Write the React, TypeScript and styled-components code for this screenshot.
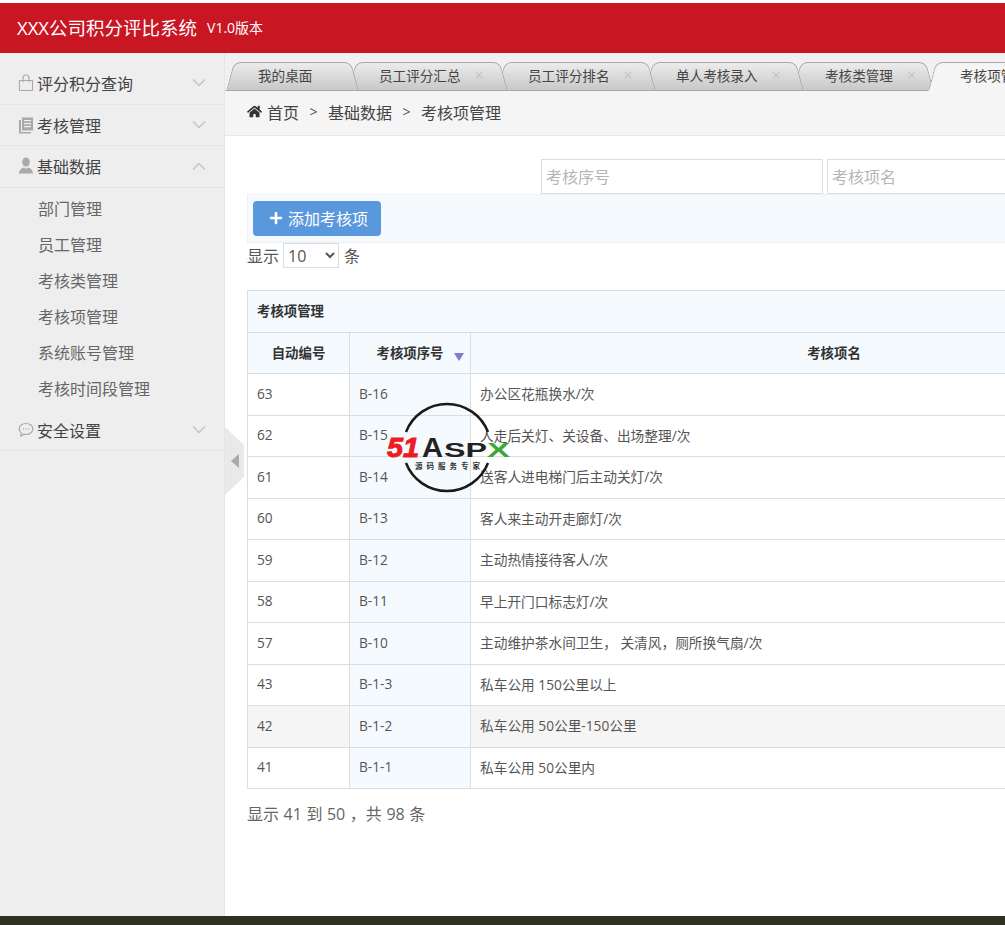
import React from 'react'
import styled, { createGlobalStyle } from 'styled-components'
import { FaHome, FaPlus } from 'react-icons/fa'

const GlobalStyle = createGlobalStyle`
    html, body {
        margin: 0;
        padding: 0;
        height: 100%;
        background: #fff;
        overflow: hidden;
    }
    body {
        font-family: "Open Sans", "Noto Sans CJK SC", sans-serif;
        color: #333;
    }
    * {
        box-sizing: border-box;
    }
`

const Page = styled.div`
    position: relative;
    width: 1005px;
    height: 925px;
    padding-top: 3px;
    display: flex;
    flex-direction: column;
    overflow: hidden;
`
const Header = styled.header`
    flex: 0 0 50px;
    background: #c81623;
    color: #fff;
    display: flex;
    align-items: center;
    padding: 0 0 3px 17px;
`
const Logo = styled.span`
    font-size: 18.5px;
`
const Version = styled.span`
    font-size: 14px;
    margin-left: 10px;
`
const Body = styled.div`
    flex: 1;
    display: flex;
    min-height: 0;
`
const Sidebar = styled.aside`
    position: relative;
    flex: 0 0 225px;
    background: #eee;
    border-right: 1px solid #e6e6e6;
    padding-top: 10px;
`
const MenuHead = styled.div`
    height: 41.5px;
    padding: 0 18px;
    display: flex;
    align-items: center;
    font-size: 16px;
    color: #444;
    border-bottom: 1px solid #e5e5e5;
`
const MenuIcon = styled.svg`
    width: 16px;
    height: 18px;
    margin-right: 3px;
    flex: none;
    color: #a9a9a9;
`
const MenuLabel = styled.span`
    flex: 1;
`
const Arrow = styled.svg`
    width: 14px;
    height: 8px;
    color: #c4c4c4;
`
const SubMenu = styled.div`
    padding: 3px 0 3px 38px;
`
const SubItem = styled.div`
    height: 36px;
    line-height: 36px;
    font-size: 16px;
    color: #666;
`
const Collapse = styled.div`
    position: absolute;
    left: 225px;
    top: 374px;
    width: 19px;
    height: 68px;
    background: #e9e9e9;
    clip-path: polygon(0 0, 100% 18px, 100% 50px, 0 100%);
    display: flex;
    align-items: center;
    padding-left: 6px;
    z-index: 3;
    &::before {
        content: '';
        border: 7px solid transparent;
        border-left: 0;
        border-right: 8px solid #a9a9a9;
    }
`
const Main = styled.main`
    flex: 1;
    min-width: 0;
    display: flex;
    flex-direction: column;
    background: #fff;
`
const TabBar = styled.div`
    height: 38px;
    padding: 9px 0 0 3px;
    background: #f0f0f0;
    display: flex;
    border-bottom: 1px solid #b5b5b5;
`
const Tab = styled.div<{ $active?: boolean; $width: number; $z: number; $pad: number; $edge: number }>`
    position: relative;
    flex: 0 0 ${(p) => p.$width}px;
    height: 29px;
    display: flex;
    align-items: center;
    font-size: 13.6px;
    color: #444;
    white-space: nowrap;
    padding: 0 0 3px ${(p) => p.$pad}px;
    z-index: ${(p) => p.$z};
    &::before, &::after {
        content: '';
        position: absolute;
        top: 0;
        bottom: 0;
        width: 60%;
        z-index: -1;
        background: ${(p) => (p.$active ? '#f5f5f5' : 'linear-gradient(#ececec, #c8c8c8)')};
        border-top: 1px solid #a8a8a8;
        border-bottom: 1px solid ${(p) => (p.$active ? '#f5f5f5' : '#a8a8a8')};
    }
    &::before {
        left: ${(p) => p.$edge}px;
        border-left: 1px solid #a8a8a8;
        border-top-left-radius: 7px;
        transform: skewX(-15deg);
    }
    &::after {
        right: 3px;
        border-right: 1px solid #a8a8a8;
        border-top-right-radius: 7px;
        transform: skewX(15deg);
    }
`
const TabClose = styled.span`
    font-size: 16px;
    color: #c4c4c4;
    margin-left: 14px;
`
const Breadcrumb = styled.div`
    height: 45px;
    background: #f5f5f5;
    border-bottom: 1px solid #e8e8e8;
    padding: 0 0 3px 22px;
    display: flex;
    align-items: center;
    font-size: 16px;
    color: #444;
    svg {
        width: 15px;
        height: 15px;
        margin-right: 5px;
        color: #333;
    }
`
const Sep = styled.span`
    margin: 0 10.5px;
    font-size: 14px;
    color: #555;
`
const Content = styled.div`
    flex: 1;
    padding: 23px 0 0 22px;
    width: 1300px;
`
const SearchRow = styled.div`
    display: flex;
    gap: 4px;
    padding-left: 294px;
`
const SearchInput = styled.input`
    width: 282px;
    height: 35px;
    border: 1px solid #ddd;
    padding: 0 4px;
    font: 16px "Open Sans", "Noto Sans CJK SC", sans-serif;
    background: #fff;
    &::placeholder {
        color: #b5b5b5;
        opacity: 1;
    }
`
const Toolbar = styled.div`
    height: 49px;
    padding: 6px 5px 5px;
    background: #f5fafe;
    border: 1px solid #eef1f4;
`
const AddButton = styled.button`
    width: 128px;
    height: 35px;
    border: 0;
    border-radius: 4px;
    background: #5a98de;
    color: #fff;
    font: 16px "Open Sans", "Noto Sans CJK SC", sans-serif;
    display: flex;
    align-items: center;
    justify-content: center;
    gap: 5px;
    padding: 0 0 2px 3px;
    svg {
        width: 14px;
        height: 14px;
    }
`
const PageSize = styled.div`
    height: 25px;
    padding-bottom: 2px;
    display: flex;
    align-items: center;
    font-size: 16px;
    color: #555;
`
const SizeSelect = styled.select`
    width: 56px;
    height: 25px;
    margin: 2px 5px 0 4px;
    border: 1px solid #ddd;
    background: #fff;
    color: #555;
    font: 16px "Open Sans", sans-serif;
    padding-left: 0;
`
const Table = styled.div`
    margin-top: 22px;
    width: 952px;
    border: 1px solid #ddd;
    border-bottom: 0;
`
const TableTitle = styled.div`
    height: 41.5px;
    padding: 0 0 3px 9px;
    display: flex;
    align-items: center;
    font-size: 13.4px;
    font-weight: 700;
    color: #333;
    background: #f5fafe;
    border-bottom: 1px solid #ddd;
`
const Row = styled.div<{ $head?: boolean; $hover?: boolean }>`
    display: grid;
    grid-template-columns: 102px 121px 1fr;
    height: 41.5px;
    font-weight: ${(p) => (p.$head ? 700 : 400)};
    background: ${(p) => (p.$head ? '#f5fafe' : p.$hover ? '#f5f5f5' : '#fff')};
    border-bottom: 1px solid #ddd;
`
const Cell = styled.div<{ $head?: boolean; $sorted?: boolean }>`
    position: relative;
    display: flex;
    align-items: center;
    justify-content: ${(p) => (p.$head ? 'center' : 'flex-start')};
    padding: 0 ${(p) => (p.$head ? 0 : 9)}px 2px;
    border-right: 1px solid #ddd;
    color: ${(p) => (p.$head ? '#333' : '#555')};
    font-size: ${(p) => (p.$head ? 13.4 : 13.7)}px;
    background: ${(p) => (p.$sorted ? '#f5fafe' : 'transparent')};
`
const SortMark = styled.span`
    position: absolute;
    right: 6px;
    top: 20px;
    border: 5px solid transparent;
    border-bottom: 0;
    border-top: 8px solid #7a7fc8;
`
const Summary = styled.div`
    margin-top: 12px;
    font-size: 16px;
    color: #666;
    word-spacing: 0.4px;
`
const Footer = styled.footer`
    flex: 0 0 9px;
    background: #2f3022;
`
const Watermark = styled.svg`
    position: absolute;
    left: 385px;
    top: 400px;
    width: 128px;
    height: 96px;
    z-index: 5;
`

const rows = [
    ['63', 'B-16', '办公区花瓶换水/次'],
    ['62', 'B-15', '人走后关灯、关设备、出场整理/次'],
    ['61', 'B-14', '送客人进电梯门后主动关灯/次'],
    ['60', 'B-13', '客人来主动开走廊灯/次'],
    ['59', 'B-12', '主动热情接待客人/次'],
    ['58', 'B-11', '早上开门口标志灯/次'],
    ['57', 'B-10', '主动维护茶水间卫生， 关清风，厕所换气扇/次'],
    ['43', 'B-1-3', '私车公用 150公里以上'],
    ['42', 'B-1-2', '私车公用 50公里-150公里'],
    ['41', 'B-1-1', '私车公用 50公里内'],
]

const tabs = [
    { title: '我的桌面', width: 130, pad: 30, edge: 2 },
    { title: '员工评分汇总', width: 149, pad: 21, edge: -6, close: true },
    { title: '员工评分排名', width: 148, pad: 21, edge: -6, close: true },
    { title: '单人考核录入', width: 148, pad: 21, edge: -6, close: true },
    { title: '考核类管理', width: 130, pad: 22, edge: -6, close: true },
    { title: '考核项管理', width: 200, pad: 27, edge: -1, active: true },
]

const subItems = ['部门管理', '员工管理', '考核类管理', '考核项管理', '系统账号管理', '考核时间段管理']

const Chevron = ({ up }: { up?: boolean }) => (
    <Arrow viewBox="0 0 14 8" fill="none" stroke="currentColor" strokeWidth="1.4">
        <path d={up ? 'M1 7.5L7 1.5L13 7.5' : 'M1 .5L7 6.5L13 .5'} />
    </Arrow>
)

const BagIcon = () => (
    <MenuIcon viewBox="0 0 16 18" fill="none" stroke="currentColor" strokeWidth="1.1">
        <path d="M1.5 6.5h13v10h-13z" />
        <path d="M5 8.5V4a3 3 0 0 1 6 0v4.5" />
    </MenuIcon>
)
const BookIcon = () => (
    <MenuIcon viewBox="0 0 16 18" fill="currentColor">
        <path d="M1 4h2v12h10v1.5H1z" />
        <path fillRule="evenodd" d="M4 1.5h11v13H4zM6 4v1.2h7V4zm0 3v1.2h7V7zm0 3v1.2h7V10z" />
    </MenuIcon>
)
const UserIcon = () => (
    <MenuIcon viewBox="0 0 16 18" fill="currentColor">
        <ellipse cx="8" cy="5" rx="3.8" ry="4.6" />
        <path d="M1 16.5c0-3.6 2.6-5.3 5-6l2 1.5 2-1.5c2.400.7 5 2.400 5 6z" />
    </MenuIcon>
)
const ChatIcon = () => (
    <MenuIcon viewBox="0 0 16 18" fill="none" stroke="currentColor" strokeWidth="1.2">
        <path d="M8 2.500c3.800 0 6.800 2.400 6.800 5.500s-3 5.500-6.800 5.500c-.8 0-1.500-.1-2.200-.3L3 15l.3-3C2 11 1.200 9.600 1.200 8 1.200 4.900 4.200 2.500 8 2.500z" />
        <path d="M5 8h.9M7.600 8h.9M10.200 8h.9" strokeWidth="1.4" />
    </MenuIcon>
)

const App: React.FC = () => {
    return (
        <Page>
            <GlobalStyle />
            <Header>
                <Logo>XXX公司积分评比系统</Logo>
                <Version>V1.0版本</Version>
            </Header>
            <Body>
                <Sidebar>
                    <MenuHead><BagIcon /><MenuLabel>评分积分查询</MenuLabel><Chevron /></MenuHead>
                    <MenuHead><BookIcon /><MenuLabel>考核管理</MenuLabel><Chevron /></MenuHead>
                    <MenuHead><UserIcon /><MenuLabel>基础数据</MenuLabel><Chevron up /></MenuHead>
                    <SubMenu>
                        {subItems.map((item) => (
                            <SubItem key={item}>{item}</SubItem>
                        ))}
                    </SubMenu>
                    <MenuHead><ChatIcon /><MenuLabel>安全设置</MenuLabel><Chevron /></MenuHead>
                    <Collapse />
                </Sidebar>
                <Main>
                    <TabBar>
                        {tabs.map((tab, index) => (
                            <Tab key={tab.title} $width={tab.width} $pad={tab.pad} $edge={tab.edge} $active={tab.active} $z={tab.active ? 20 : 10 - index}>
                                {tab.title}
                                {tab.close && <TabClose>×</TabClose>}
                            </Tab>
                        ))}
                    </TabBar>
                    <Breadcrumb>
                        <FaHome />
                        首页<Sep>&gt;</Sep>基础数据<Sep>&gt;</Sep>考核项管理
                    </Breadcrumb>
                    <Content>
                        <SearchRow>
                            <SearchInput placeholder="考核序号" />
                            <SearchInput placeholder="考核项名" />
                        </SearchRow>
                        <Toolbar>
                            <AddButton><FaPlus />添加考核项</AddButton>
                        </Toolbar>
                        <PageSize>
                            显示
                            <SizeSelect defaultValue="10">
                                <option value="10">10</option>
                                <option value="25">25</option>
                            </SizeSelect>
                            条
                        </PageSize>
                        <Table>
                            <TableTitle>考核项管理</TableTitle>
                            <Row $head>
                                <Cell $head>自动编号</Cell>
                                <Cell $head>考核项序号<SortMark /></Cell>
                                <Cell $head>考核项名</Cell>
                            </Row>
                            {rows.map((row) => (
                                <Row key={row[0]} $hover={row[0] === '42'}>
                                    <Cell>{row[0]}</Cell>
                                    <Cell $sorted>{row[1]}</Cell>
                                    <Cell>{row[2]}</Cell>
                                </Row>
                            ))}
                        </Table>
                        <Summary>显示 41 到 50 ，共 98 条</Summary>
                    </Content>
                </Main>
            </Body>
            <Footer />
            <Watermark viewBox="0 0 128 96">
                <path d="M21 32A44 44 0 0 1 103 32M103 63A44 44 0 0 1 21 63" fill="none" stroke="#1a1a1a" strokeWidth="2.5" />
                <text x="2" y="57" fontFamily="Liberation Sans" fontWeight="700" fontStyle="italic" fontSize="28" textLength="32" lengthAdjust="spacingAndGlyphs" stroke="#ed1c24" strokeWidth="1" fill="#ed1c24">51</text>
                <text x="37" y="57" fontFamily="Liberation Sans" fontWeight="700" fontSize="28" textLength="21" lengthAdjust="spacingAndGlyphs" fill="#222">A</text>
                <text x="59" y="57" fontFamily="Liberation Sans" fontWeight="700" fontSize="20" textLength="43" lengthAdjust="spacingAndGlyphs" fill="#222">SP</text>
                <text x="102" y="57" fontFamily="Liberation Sans" fontWeight="700" fontSize="20" textLength="23" lengthAdjust="spacingAndGlyphs" fill="#3aa935">X</text>
                <text x="30" y="69" fontFamily="Noto Sans CJK SC" fontWeight="700" fontSize="7.5" textLength="65" fill="#333">源码服务专家</text>
            </Watermark>
        </Page>
    )
}

export default App
